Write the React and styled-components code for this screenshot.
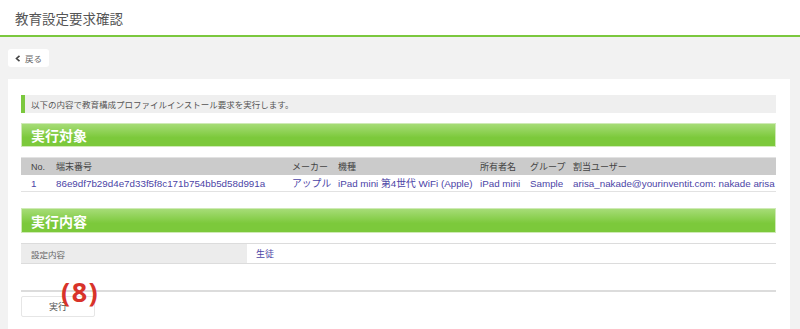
import React from 'react';
import styled, {createGlobalStyle} from 'styled-components';

const GlobalStyle = createGlobalStyle`
  body {
    margin: 0;
    background: #f2f2f2;
    font-family: "Liberation Sans", "Noto Sans CJK JP", sans-serif;
    color: #555;
  }
`;

const green = '#7bc83e';
const linkColor = '#4b44a6';

const Header = styled.header`
  height: 35px;
  background: #fff;
  border-bottom: 2px solid ${green};
  display: flex;
  align-items: center;
  padding-left: 15px;
  font-size: 13.5px;
  color: #555;
`;

const Toolbar = styled.div`
  padding: 12px 8px;
  display: flex;
`;

const BackButton = styled.button`
  width: 41px;
  height: 18px;
  background: #fff;
  border: none;
  border-radius: 3px;
  display: flex;
  align-items: center;
  gap: 4px;
  padding: 0 0 0 7px;
  font-family: inherit;
  font-size: 8.5px;
  color: #666;
`;

const Panel = styled.main`
  position: relative;
  margin: 0 10px 0 8px;
  background: #fff;
  padding: 16px 14px 12px 13px;
`;

const Notice = styled.div`
  height: 18px;
  box-sizing: border-box;
  border-left: 4px solid ${green};
  background: #efefef;
  padding-left: 6px;
  display: flex;
  align-items: center;
  font-size: 8.5px;
  color: #555;
`;

const SectionTitle = styled.h2`
  margin: ${p => p.$top}px 0 0;
  height: ${p => p.$height}px;
  box-sizing: border-box;
  border: 1px solid #cfeab6;
  background: linear-gradient(#a6dc77, #7cc93b 62%);
  color: #fff;
  font-size: 14px;
  font-weight: bold;
  display: flex;
  align-items: center;
  padding-left: 9px;
`;

const DeviceTable = styled.table`
  margin-top: 10px;
  width: 100%;
  border-collapse: collapse;
  table-layout: fixed;
`;

const HeadCell = styled.th`
  height: 17px;
  padding: 0;
  background: #cbcbcb;
  border-top: 1px solid #e2e2e2;
  text-align: left;
  font-weight: normal;
  font-size: 9px;
  color: #444;
  white-space: nowrap;
  &:first-child { padding-left: 10px; }
`;

const DataCell = styled.td`
  height: 16px;
  padding: 0;
  border-bottom: 1px solid #e2e2e2;
  font-size: 9.8px;
  color: ${linkColor};
  white-space: nowrap;
  &:first-child { padding-left: 10px; }
`;

const SettingTable = styled.div`
  margin-top: 10px;
  display: flex;
  height: 21px;
  box-sizing: border-box;
  border-top: 1px solid #dcdcdc;
  border-bottom: 1px solid #dcdcdc;
`;

const SettingLabel = styled.div`
  width: 226px;
  background: #ececec;
  padding-left: 10px;
  box-sizing: border-box;
  display: flex;
  align-items: center;
  font-size: 8.5px;
  color: #666;
`;

const SettingValue = styled.div`
  padding-left: 9px;
  display: flex;
  align-items: center;
  font-size: 9px;
  color: ${linkColor};
`;

const Divider = styled.hr`
  margin: 26px 0 0;
  border: none;
  border-top: 2px solid #dcdcdc;
`;

const RunButton = styled.button`
  margin-top: 4px;
  width: 74px;
  height: 21px;
  background: #fff;
  border: 1px solid #e6e6e6;
  border-radius: 2px;
  font-family: inherit;
  font-size: 9px;
  color: #555;
`;

const Annotation = styled.span`
  position: absolute;
  left: 53px;
  top: 194px;
  font-family: "Noto Sans", sans-serif;
  font-weight: bold;
  font-size: 27px;
  letter-spacing: 1.5px;
  color: #d8332a;
`;

const columns = [35, 236, 46, 142, 50, 43, null];
const heads = ['No.', '端末番号', 'メーカー', '機種', '所有者名', 'グループ', '割当ユーザー'];
const row = ['1', '86e9df7b29d4e7d33f5f8c171b754bb5d58d991a', 'アップル', 'iPad mini 第4世代 WiFi (Apple)', 'iPad mini', 'Sample', 'arisa_nakade@yourinventit.com: nakade arisa'];

const App = () => {
    return (
        <>
            <GlobalStyle/>
            <Header>教育設定要求確認</Header>
            <Toolbar>
                <BackButton>
                    <svg width="6" height="7" viewBox="0 0 6 7">
                        <polyline points="4.5,0.8 1.5,3.5 4.5,6.2" fill="none" stroke="#444" strokeWidth="1.6"/>
                    </svg>
                    戻る
                </BackButton>
            </Toolbar>
            <Panel>
                <Notice>以下の内容で教育構成プロファイルインストール要求を実行します。</Notice>
                <SectionTitle $top={10} $height={24}>実行対象</SectionTitle>
                <DeviceTable>
                    <colgroup>
                        {columns.map((w, i) => <col key={i} style={w ? {width: w} : undefined}/>)}
                    </colgroup>
                    <thead>
                        <tr>{heads.map(h => <HeadCell key={h}>{h}</HeadCell>)}</tr>
                    </thead>
                    <tbody>
                        <tr>{row.map((c, i) => <DataCell key={i}>{c}</DataCell>)}</tr>
                    </tbody>
                </DeviceTable>
                <SectionTitle $top={16} $height={25}>実行内容</SectionTitle>
                <SettingTable>
                    <SettingLabel>設定内容</SettingLabel>
                    <SettingValue>生徒</SettingValue>
                </SettingTable>
                <Divider/>
                <RunButton>実行</RunButton>
                <Annotation>(8)</Annotation>
            </Panel>
        </>
    )
};

export default App;
